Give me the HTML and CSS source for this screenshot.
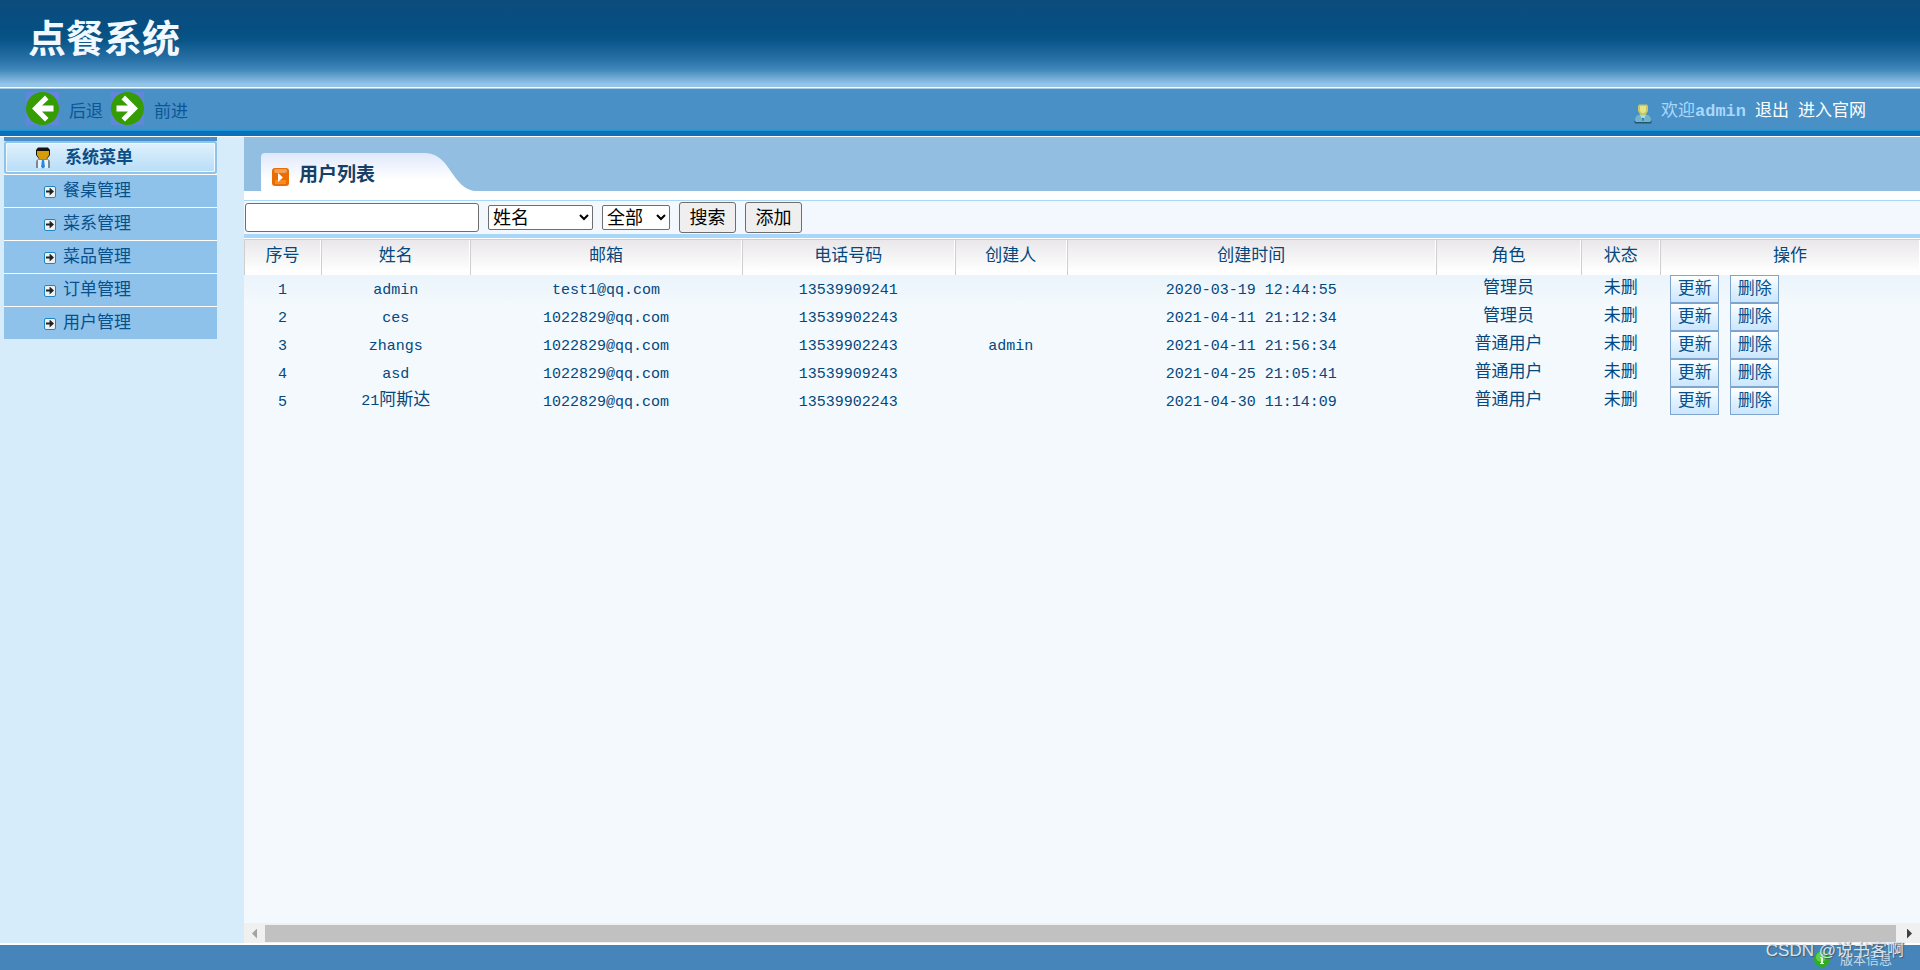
FILE: index.html
```html
<!DOCTYPE html>
<html lang="zh-CN">
<head>
<meta charset="utf-8">
<title>点餐系统</title>
<link rel="stylesheet" href="styles.css">
</head>
<body>
<header class="banner"><h1 class="title">点餐系统</h1></header>
<nav class="nav">
  <div class="history">
    <a href="#"><svg class="arrow" viewBox="0 0 33 33"><circle cx="16.500" cy="16.500" r="16.500" fill="#359c04"/><path d="M19 3.500 22.500 7.500 16 13.500H27.500V19.500H16L22.500 26 19 29.500 6 16.500Z" fill="#fff"/></svg><span>后退</span></a>
    <a href="#"><svg class="arrow" viewBox="0 0 33 33"><circle cx="16.500" cy="16.500" r="16.500" fill="#359c04"/><path d="M14 3.500 10.500 7.500 17 13.500H5.500V19.500H17L10.500 26 14 29.500 27 16.500Z" fill="#fff"/></svg><span>前进</span></a>
  </div>
  <div class="account">
    <svg class="user" viewBox="0 0 18 20"><path d="M1 16Q1 11 6 10.500H12Q17 11 17 16L16 18.500H2Z" fill="#6db4cc"/><path d="M0 16.500 2 18H16L18 16.500 17 19.500H1Z" fill="#24566b"/><path d="M6 11 9 17 12 11Z" fill="#a9d9e8"/><path d="M8 14H10L9.500 17H8.500Z" fill="#2c6f94"/><path d="M5 .5H13L14 2V7L11.500 11H6.500L4 7V2Z" fill="#c8c860"/><path d="M6 2H12V7L10 9H8L6 7Z" fill="#e4e48c"/></svg>
    <span class="welcome">欢迎<b>admin</b></span>
    <a href="#">退出</a>
    <a href="#">进入官网</a>
  </div>
</nav>
<div class="body">
  <aside class="side">
    <div class="menu">
      <h2 class="menu-head"><svg class="person" viewBox="0 0 16 22"><path d="M1 15Q1 12 5 12H11Q15 12 15 15V21H1Z" fill="#7d8791"/><path d="M3 13H13V21H3Z" fill="#e6f2fc"/><path d="M7 13H9L10 20 8 21.500 6 20Z" fill="#2f86dd"/><path d="M1 3 3 .5H13L15 3V8L12 12H4L1 8Z" fill="#15120a"/><path d="M2 4H14V8L11.500 12H4.500L2 8Z" fill="#d79c0c"/></svg>系统菜单</h2>
      <ul class="menu-list">
        <li><a href="#"><i class="go"></i>餐桌管理</a></li>
        <li><a href="#"><i class="go"></i>菜系管理</a></li>
        <li><a href="#"><i class="go"></i>菜品管理</a></li>
        <li><a href="#"><i class="go"></i>订单管理</a></li>
        <li><a href="#"><i class="go"></i>用户管理</a></li>
      </ul>
    </div>
  </aside>
  <main class="main">
    <div class="tabs">
      <div class="tab">
        <svg class="play" viewBox="0 0 17 18"><rect width="17" height="18" rx="3" fill="#e96d05"/><rect x="2" y="1" width="13" height="4" rx="2" fill="#f3a055"/><path d="M3 12H14V16H3Z" fill="#ff8a1c"/><path d="M6 5 11 9.500 6 14Z" fill="#fff"/></svg>
        <h2>用户列表</h2>
      </div>
      <svg class="tab-edge" viewBox="0 0 48 38" preserveAspectRatio="none"><defs><linearGradient id="g" x2="0" y2="1"><stop offset="0" stop-color="#dfe8fb"/><stop offset=".7" stop-color="#fff"/></linearGradient></defs><path d="M0 0C14 1 19 10 26 20S38 36 48 38H0Z" fill="url(#g)"/></svg>
    </div>
    <form class="search">
      <input type="text" class="keyword" aria-label="关键字">
      <select class="field" aria-label="字段"><option>姓名</option></select>
      <select class="scope" aria-label="范围"><option>全部</option></select>
      <button type="button">搜索</button>
      <button type="button">添加</button>
    </form>
    <table class="grid">
      <colgroup><col class="c1"><col class="c2"><col class="c3"><col class="c4"><col class="c5"><col class="c6"><col class="c7"><col class="c8"><col></colgroup>
      <thead><tr><th>序号</th><th>姓名</th><th>邮箱</th><th>电话号码</th><th>创建人</th><th>创建时间</th><th>角色</th><th>状态</th><th>操作</th></tr></thead>
      <tbody>
        <tr><td class="en">1</td><td class="en">admin</td><td class="en">test1@qq.com</td><td class="en">13539909241</td><td></td><td class="en">2020-03-19 12:44:55</td><td>管理员</td><td>未删</td><td><div class="ops"><button>更新</button><button>删除</button></div></td></tr>
        <tr><td class="en">2</td><td class="en">ces</td><td class="en">1022829@qq.com</td><td class="en">13539902243</td><td></td><td class="en">2021-04-11 21:12:34</td><td>管理员</td><td>未删</td><td><div class="ops"><button>更新</button><button>删除</button></div></td></tr>
        <tr><td class="en">3</td><td class="en">zhangs</td><td class="en">1022829@qq.com</td><td class="en">13539902243</td><td class="en">admin</td><td class="en">2021-04-11 21:56:34</td><td>普通用户</td><td>未删</td><td><div class="ops"><button>更新</button><button>删除</button></div></td></tr>
        <tr><td class="en">4</td><td class="en">asd</td><td class="en">1022829@qq.com</td><td class="en">13539909243</td><td></td><td class="en">2021-04-25 21:05:41</td><td>普通用户</td><td>未删</td><td><div class="ops"><button>更新</button><button>删除</button></div></td></tr>
        <tr><td class="en">5</td><td><span class="en-part">21</span>阿斯达</td><td class="en">1022829@qq.com</td><td class="en">13539902243</td><td></td><td class="en">2021-04-30 11:14:09</td><td>普通用户</td><td>未删</td><td><div class="ops"><button>更新</button><button>删除</button></div></td></tr>
      </tbody>
    </table>
    <div class="scroll"><i class="left"></i><div class="thumb"></div><i class="right"></i></div>
  </main>
</div>
<footer class="footer">
  <svg class="info" viewBox="0 0 16 16"><circle cx="8" cy="8" r="8" fill="#2fae22"/><circle cx="7" cy="6" r="5" fill="#5fd04a"/><path d="M6 6H9V12H10V13H6V12H7V7H6ZM7 3H9V5H7Z" fill="#e8ffe0"/></svg>
  <span>版本信息</span>
  <div class="mark">CSDN @说书客啊</div>
</footer>
</body>
</html>
```
FILE: styles.css
```css
* { box-sizing: border-box; }
body {
  margin: 0;
  min-height: 100vh;
  display: flex;
  flex-direction: column;
  background: #fff;
  color: #03487e;
  font: 17px/24px "Liberation Mono", "Noto Sans CJK SC", monospace;
}
a { color: inherit; text-decoration: none; }
h1, h2, ul { margin: 0; padding: 0; }
ul { list-style: none; }
button, select, input { font-family: "Liberation Sans", "Noto Sans CJK SC", sans-serif; }

.banner {
  height: 87px;
  padding: 0 28px;
  display: flex;
  align-items: center;
  background: linear-gradient(#0c4c7c 0, #064f83 30px, #085487 40px, #2872a8 60px, #4189bb 70px, #94c4e8 84px, #94c4e8 87px);
}
.title {
  color: #f2f8ff;
  font: bold 38px/72px "Noto Sans CJK SC", sans-serif;
  padding-bottom: 15px;
}
.nav {
  height: 50px;
  padding: 0 54px 0 26px;
  display: flex;
  justify-content: space-between;
  align-items: center;
  border-top: 1px solid #fff;
  border-bottom: 1px solid #fff;
  background: linear-gradient(#a9c9e2 0, #a9c9e2 1px, #4990c6 1px, #4990c6 41px, #1ea5e0 41px, #1592d3 43px, #0b6fbc 43px);
}
.history { display: flex; gap: 8px; padding-bottom: 7px; }
.history a { display: flex; align-items: center; gap: 10px; color: #0b5796; }
.history span { padding-top: 8px; }
.arrow { width: 33px; height: 33px; background: #6087dc; }
.account { display: flex; align-items: center; gap: 9px; color: #fff; }
.user { width: 18px; height: 20px; margin-top: 4px; }
.welcome { color: #a8d8fc; }

.body { flex: 1; display: flex; background: #d6ecfb; border-bottom: 2px solid #fff; }
.side { width: 244px; flex: none; padding: 0 27px 0 4px; }
.menu { border-top: 4px solid #4990c6; }
.menu-head {
  height: 33px;
  padding: 0 0 3px 29px;
  display: flex;
  align-items: center;
  gap: 14px;
  font: bold 17px/24px "Noto Sans CJK SC", sans-serif;
  color: #0a4f88;
  border: 2px solid #8ec3ea;
  border-radius: 3px;
  box-shadow: inset 0 0 0 1px #f1f9ff;
  background: linear-gradient(#e0f1fc, #b7ddf7);
}
.person { width: 16px; height: 22px; margin-top: 3px; }
.menu-list a {
  height: 33px;
  padding: 1px 0 0 40px;
  display: flex;
  align-items: center;
  gap: 7px;
  border-top: 1px solid #fff;
  background: #8ec2ea;
  color: #07508c;
}
.go {
  width: 12px;
  height: 12px;
  border: 1px solid #1f86c0;
  border-radius: 2px;
  background: #eef1f4;
  display: grid;
  place-items: center;
}
.go::before {
  content: "";
  width: 8px;
  height: 8px;
  background: #222;
  clip-path: polygon(0 38%, 45% 38%, 45% 0, 100% 50%, 45% 100%, 45% 62%, 0 62%);
}

.main { flex: 1; min-width: 0; display: flex; flex-direction: column; background: #f3f9fd; }
.tabs {
  height: 63px;
  padding: 16px 0 0 17px;
  display: flex;
  background: #92bfe1;
  border-bottom: 9px solid #fff;
}
.tab {
  width: 165px;
  display: flex;
  align-items: center;
  gap: 10px;
  padding-left: 11px;
  border-top-left-radius: 4px;
  background: linear-gradient(#dfe8fb, #fff 70%);
}
.tab h2 { font: bold 19px/28px "Noto Sans CJK SC", sans-serif; color: #173f66; white-space: nowrap; padding-top: 2px; }
.play { width: 17px; height: 18px; margin-top: 10px; flex: none; }
.tab-edge { width: 48px; height: 38px; }

.search {
  height: 38px;
  margin-bottom: 1px;
  padding-left: 1px;
  display: flex;
  align-items: center;
  gap: 9px;
  border-top: 1px solid #a9d7f8;
  border-bottom: 4px solid #a9d7fa;
  box-shadow: 0 1px #fff;
  background: #f3f7fe;
}
.search input, .search select, .search button {
  border: 1px solid #6e6e6e;
  border-radius: 3px;
  color: #000;
  font-size: 18px;
  line-height: 26px;
}
.search .keyword { width: 234px; height: 29px; padding: 0 4px; background: #fff; }
.search select { height: 25px; padding: 0; background: #fff; line-height: 23px; border-radius: 2px; }
.search .field { width: 105px; }
.search .scope { width: 68px; }
.search button { width: 57px; height: 31px; padding: 0; background: #efefef; }

.grid { width: 100%; table-layout: fixed; border-collapse: collapse; background: linear-gradient(#fff 35px, #eaf4fb 36px, #f3f9fd 64px); }
.c1 { width: 4.6%; }
.c2 { width: 8.9%; }
.c3 { width: 16.2%; }
.c4 { width: 12.7%; }
.c5 { width: 6.7%; }
.c6 { width: 22%; }
.c7 { width: 8.7%; }
.c8 { width: 4.7%; }
.grid th {
  height: 36px;
  padding: 0;
  font-weight: normal;
  background: linear-gradient(#e8e6e9, #fff 90%);
  box-shadow: inset 1px 1px #cfcfcf, inset -1px 0 #fff;
}
.grid td { height: 28px; padding: 0; text-align: center; }
.grid .en { font-size: 15px; padding-top: 4px; }
.en-part { font-size: 15px; }
.ops { display: flex; gap: 11px; padding-left: 10px; }
.ops button {
  width: 49px;
  height: 28px;
  padding: 0;
  border: 1px solid #7fa5cc;
  background: linear-gradient(#fff, #e0f2ff 50%, #cbe6ff);
  color: #07508c;
  font-size: 17px;
  line-height: 24px;
}

.scroll { margin-top: auto; height: 20px; padding: 2px 8px 1px; display: flex; align-items: center; gap: 8px; background: #f0f0f0; }
.thumb { flex: 1; height: 17px; background: #c1c1c1; }
.left, .right { width: 5px; height: 10px; background: #a3a3a3; clip-path: polygon(0 50%, 100% 0, 100% 100%); }
.right { background: #404040; clip-path: polygon(0 0, 100% 50%, 0 100%); margin-left: 3px; }

.footer {
  position: relative;
  height: 25px;
  padding: 2px 28px 0 0;
  display: flex;
  justify-content: flex-end;
  align-items: center;
  gap: 10px;
  background: #4585b9;
  color: #c9d8e6;
  font: 13px/18px "Noto Sans CJK SC", sans-serif;
}
.info { width: 16px; height: 16px; }
.mark {
  position: absolute;
  right: 16px;
  top: -6px;
  color: #dbe4ec;
  font: 17px/24px "Liberation Sans", "Noto Sans CJK SC", sans-serif;
  text-shadow: 1px 1px 1px #4a5a6a;
}
```
